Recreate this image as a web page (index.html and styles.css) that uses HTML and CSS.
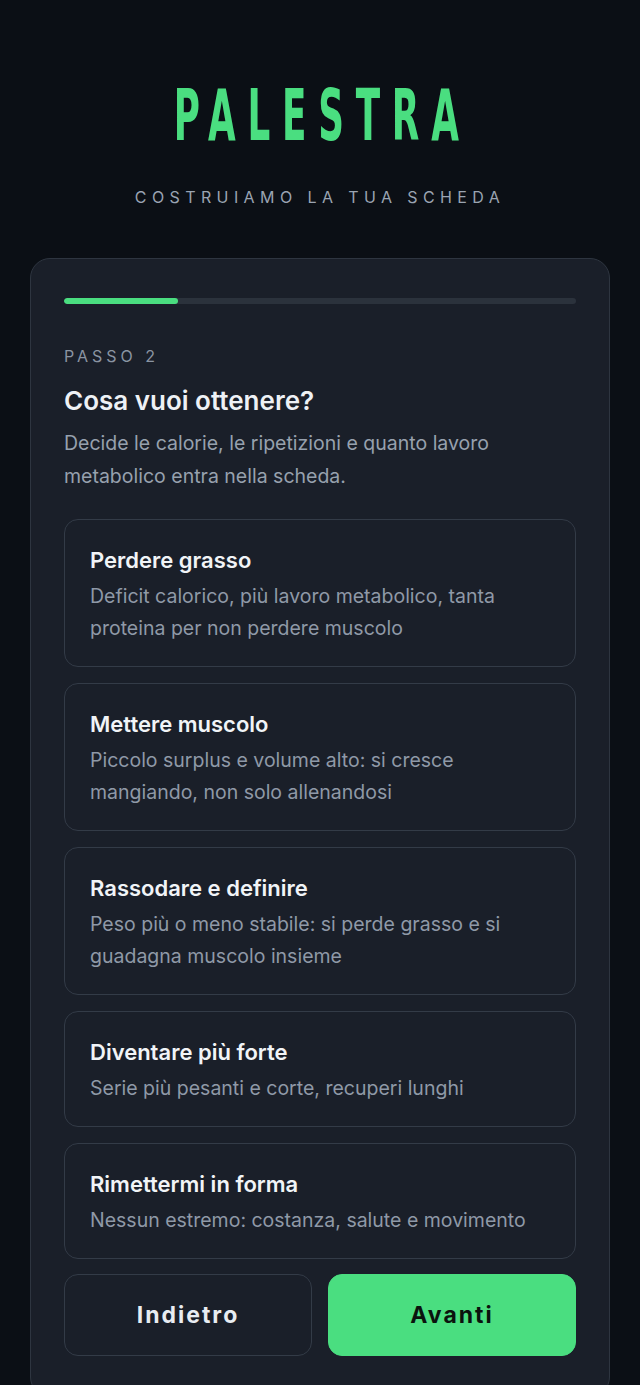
FILE: index.html
```html
<!DOCTYPE html>
<html lang="it">
<head>
<meta charset="utf-8">
<title>Palestra</title>
<link rel="stylesheet" href="styles.css">
</head>
<body>
<div class="page">
  <header class="hero">
    <h1 class="brand"><span class="brand-text">PALESTRA</span></h1>
    <p class="tagline">COSTRUIAMO LA TUA SCHEDA</p>
  </header>
  <main class="panel">
    <div class="progress"><div class="progress-fill" style="width:22.2%"></div></div>
    <p class="step">PASSO 2</p>
    <h2 class="question">Cosa vuoi ottenere?</h2>
    <p class="intro">Decide le calorie, le ripetizioni e quanto lavoro metabolico entra nella scheda.</p>
    <div class="options">
      <button class="option">
        <span class="option-title">Perdere grasso</span>
        <span class="option-desc">Deficit calorico, più lavoro metabolico, tanta proteina per non perdere muscolo</span>
      </button>
      <button class="option">
        <span class="option-title">Mettere muscolo</span>
        <span class="option-desc">Piccolo surplus e volume alto: si cresce mangiando, non solo allenandosi</span>
      </button>
      <button class="option">
        <span class="option-title">Rassodare e definire</span>
        <span class="option-desc">Peso più o meno stabile: si perde grasso e si guadagna muscolo insieme</span>
      </button>
      <button class="option">
        <span class="option-title">Diventare più forte</span>
        <span class="option-desc">Serie più pesanti e corte, recuperi lunghi</span>
      </button>
      <button class="option">
        <span class="option-title">Rimettermi in forma</span>
        <span class="option-desc">Nessun estremo: costanza, salute e movimento</span>
      </button>
    </div>
    <div class="actions">
      <button class="btn btn-back">Indietro</button>
      <button class="btn btn-next">Avanti</button>
    </div>
  </main>
</div>
</body>
</html>
```
FILE: styles.css
```css
* { box-sizing: border-box; }
html, body {
  margin: 0;
  padding: 0;
}
body {
  background: #0b0f15;
  font-family: "Inter", "DejaVu Sans", sans-serif;
  color: #e8ecf1;
  min-height: 1385px;
  overflow: hidden;
}
.page {
  padding: 0 30px;
}
.hero {
  text-align: center;
  padding-top: 78px;
}
.brand {
  margin: 0;
  font-family: "DejaVu Sans Condensed", "DejaVu Sans", sans-serif;
  font-weight: 700;
  font-size: 71px;
  line-height: 76px;
  color: #4ade80;
}
.brand-text {
  display: inline-block;
  letter-spacing: 21px;
  margin-right: -5px;
  transform: scaleX(0.56);
  transform-origin: center;
}
.tagline {
  margin: 33px 0 0;
  font-size: 16px;
  line-height: 20px;
  letter-spacing: 5.4px;
  color: #9aa4b2;
}
.panel {
  margin-top: 51px;
  background: #1a1f29;
  border: 1px solid #2e3540;
  border-radius: 20px;
  padding: 39px 33px 40px;
}
.progress {
  height: 6px;
  background: #2b323c;
  border-radius: 3px;
  overflow: hidden;
}
.progress-fill {
  height: 100%;
  background: #4ade80;
  border-radius: 3px;
}
.step {
  margin: 42px 0 0;
  font-size: 16px;
  line-height: 20px;
  letter-spacing: 4px;
  color: #8a94a2;
}
.question {
  margin: 19px 0 0;
  font-size: 26px;
  line-height: 32px;
  font-weight: 600;
  color: #eef1f5;
}
.intro {
  margin: 10px 0 0;
  font-size: 19.5px;
  line-height: 33px;
  color: #97a1ae;
}
.options {
  margin-top: 26px;
  display: flex;
  flex-direction: column;
  gap: 16px;
}
.option {
  display: flex;
  flex-direction: column;
  align-items: flex-start;
  text-align: left;
  background: #1a1f29;
  border: 1px solid #333b47;
  border-radius: 14px;
  padding: 26px 25px 22px;
  font-family: inherit;
  cursor: pointer;
}
.option-title {
  font-size: 22px;
  line-height: 28px;
  font-weight: 600;
  color: #f1f4f7;
}
.option-desc {
  margin-top: 6px;
  font-size: 19.5px;
  line-height: 32px;
  color: #8f99a7;
}
.actions {
  margin-top: 15px;
  display: grid;
  grid-template-columns: 1fr 1fr;
  gap: 16px;
}
.btn {
  height: 82px;
  border-radius: 14px;
  font-family: inherit;
  font-size: 23px;
  font-weight: 700;
  letter-spacing: 2px;
  cursor: pointer;
}
.btn-back {
  background: #1a1f29;
  border: 1px solid #333b47;
  color: #e8ecf1;
}
.btn-next {
  background: #4ade80;
  border: 1px solid #4ade80;
  color: #0b130e;
}
```
